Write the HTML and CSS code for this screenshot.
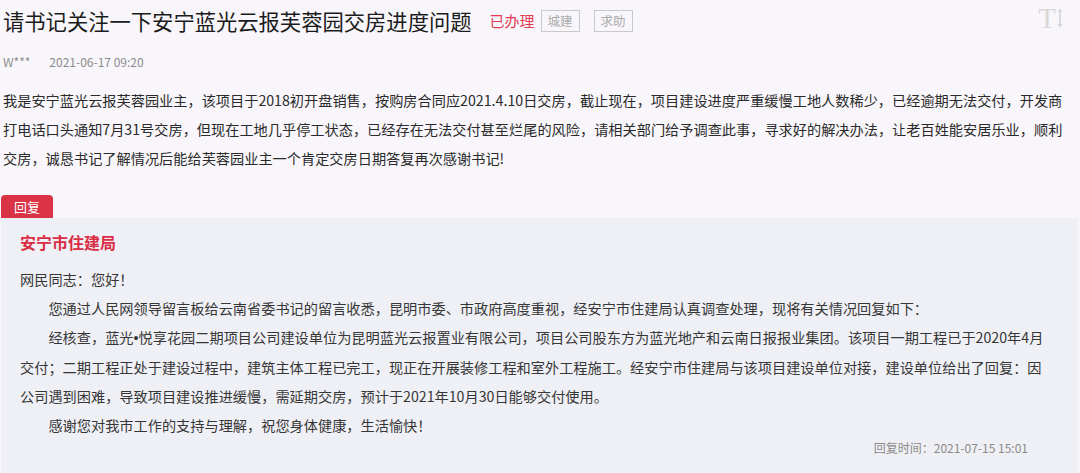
FILE: index.html
```html
<!DOCTYPE html>
<html lang="zh-CN">
<head>
<meta charset="utf-8">
<title>留言详情</title>
<link rel="stylesheet" href="styles.css">
</head>
<body>
<div class="page">
  <header class="title-row">
    <h1 class="title">请书记关注一下安宁蓝光云报芙蓉园交房进度问题</h1>
    <span class="status">已办理</span>
    <span class="tag">城建</span>
    <span class="tag">求助</span>
    <span class="font-toggle" aria-label="字号">
      <span class="font-t">T</span>
      <svg class="font-arrow" width="6" height="20" viewBox="0 0 6 20">
        <path d="M3 1 L3 19" stroke="#d6d6d6" stroke-width="1.6" fill="none"/>
        <path d="M0.5 4 L3 0.8 L5.5 4 Z" fill="#d6d6d6"/>
        <path d="M0.5 16 L3 19.2 L5.5 16 Z" fill="#d6d6d6"/>
      </svg>
    </span>
  </header>
  <div class="meta">
    <span class="author">W***</span>
    <span class="date">2021-06-17 09:20</span>
  </div>
  <p class="content">我是安宁蓝光云报芙蓉园业主，该项目于2018初开盘销售，按购房合同应2021.4.10日交房，截止现在，项目建设进度严重缓慢工地人数稀少，已经逾期无法交付，开发商打电话口头通知7月31号交房，但现在工地几乎停工状态，已经存在无法交付甚至烂尾的风险，请相关部门给予调查此事，寻求好的解决办法，让老百姓能安居乐业，顺利交房，诚恳书记了解情况后能给芙蓉园业主一个肯定交房日期答复再次感谢书记!</p>
  <section class="reply">
    <div class="reply-tab">回复</div>
    <div class="reply-box">
      <div class="org">安宁市住建局</div>
      <div class="reply-text">
        <p>网民同志：您好！</p>
        <p class="indent">您通过人民网领导留言板给云南省委书记的留言收悉，昆明市委、市政府高度重视，经安宁市住建局认真调查处理，现将有关情况回复如下：</p>
        <p class="indent">经核查，蓝光<span class="dot">•</span>悦享花园二期项目公司建设单位为昆明蓝光云报置业有限公司，项目公司股东方为蓝光地产和云南日报报业集团。该项目一期工程已于2020年4月交付；二期工程正处于建设过程中，建筑主体工程已完工，现正在开展装修工程和室外工程施工。经安宁市住建局与该项目建设单位对接，建设单位给出了回复：因公司遇到困难，导致项目建设推进缓慢，需延期交房，预计于2021年10月30日能够交付使用。</p>
        <p class="indent">感谢您对我市工作的支持与理解，祝您身体健康，生活愉快！</p>
      </div>
      <div class="reply-time">回复时间：2021-07-15 15:01</div>
    </div>
  </section>
</div>
</body>
</html>
```

FILE: styles.css
```css
html, body {
  margin: 0;
  padding: 0;
  background: #f8f6fa;
}

body {
  font-family: "Noto Sans CJK SC", "Noto Sans", sans-serif;
  color: #222;
}

.page {
  width: 1080px;
  height: 473px;
  overflow: hidden;
}

.title-row {
  display: flex;
  align-items: center;
  height: 30px;
  padding: 6px 17px 0 3px;
}

.title {
  margin: 0;
  font-size: 21.3px;
  font-weight: normal;
  line-height: 30px;
  color: #1b1b1b;
  white-space: nowrap;
}

.status {
  margin-left: 18px;
  font-size: 15px;
  line-height: 22px;
  color: #e23c54;
}

.tag {
  margin-left: 6px;
  height: 20px;
  padding: 0 6px;
  border: 1px solid #c9c9c9;
  font-size: 12.5px;
  line-height: 20px;
  color: #ababab;
}

.tag + .tag {
  margin-left: 14px;
}

.font-toggle {
  margin-left: auto;
  display: flex;
  align-items: center;
  height: 22px;
  margin-top: -6px;
}

.font-t {
  font-family: "Liberation Serif", serif;
  font-size: 29px;
  line-height: 22px;
  color: #d8d8d8;
}

.font-arrow {
  margin-left: 1px;
}

.meta {
  display: flex;
  align-items: center;
  height: 20px;
  margin-top: 16px;
  padding-left: 3px;
  font-size: 12px;
  line-height: 20px;
  color: #8c8c8c;
}

.date {
  margin-left: 19px;
}

.content {
  width: 1068px;
  margin: 14px 0 0 3px;
  font-size: 14.2px;
  line-height: 29px;
  color: #2a2a2a;
}

.reply {
  margin-top: 22px;
}

.reply-tab {
  width: 52px;
  height: 23px;
  margin-left: 1px;
  border-radius: 4px 4px 0 0;
  background: #db3346;
  color: #fff;
  font-size: 13px;
  line-height: 23px;
  text-align: center;
}

.reply-box {
  width: 1027px;
  margin-left: 1px;
  padding: 12px 31px 40px 19px;
  background: #eff0f5;
}

.org {
  font-size: 16px;
  font-weight: bold;
  line-height: 24px;
  color: #d92d45;
}

.reply-text {
  margin-top: 11px;
  font-size: 14.2px;
  line-height: 29px;
  color: #363636;
}

.reply-text p {
  margin: 0;
}

.reply-text .indent {
  text-indent: 2em;
}

.dot {
  font-family: "Liberation Sans", sans-serif;
}

.reply-time {
  margin-top: 0;
  padding-right: 19px;
  text-align: right;
  font-size: 12px;
  line-height: 16px;
  color: #8a8a8a;
}
```
